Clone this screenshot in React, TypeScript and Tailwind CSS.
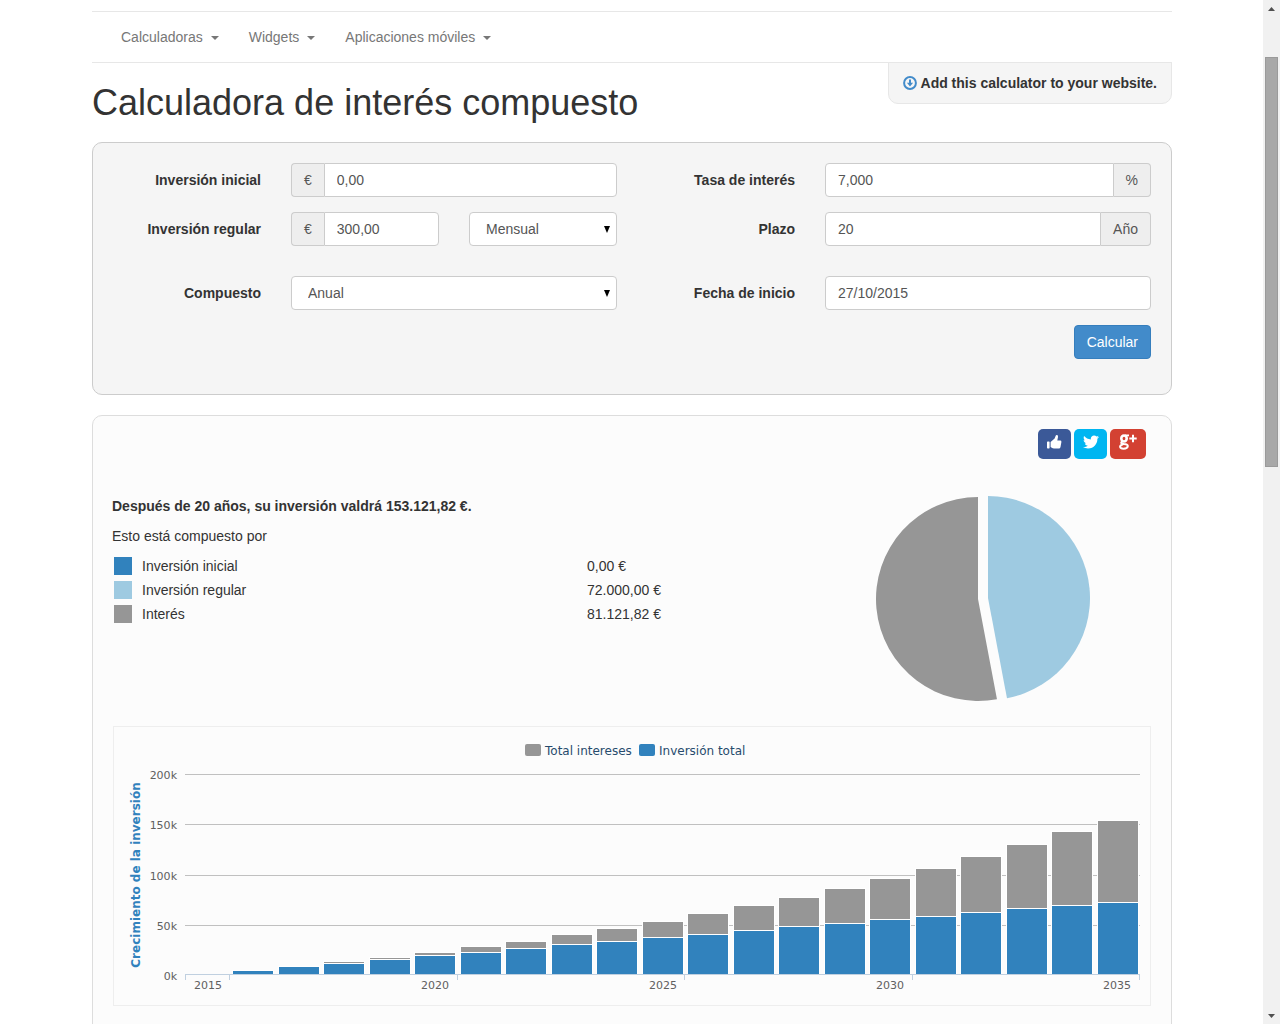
import React from "react";
import { FaTwitter } from "react-icons/fa";

const menus = ["Calculadoras", "Widgets", "Aplicaciones móviles"];

const field =
  "h-[34px] min-w-0 flex-1 border border-[#cccccc] bg-white px-3 text-sm text-[#555555] outline-none";
const addon =
  "flex h-[34px] items-center border border-[#cccccc] bg-[#eeeeee] px-3 text-sm text-[#555555]";
const label = "px-[15px] pt-[7px] text-right text-sm font-bold leading-5";
const social = "flex h-[30px] items-center justify-center rounded-[5px] pb-1 text-white";

function Select({ id, name, value }: { id: string; name: string; value: string }) {
  return (
    <div className="relative">
      <select
        id={id}
        aria-label={name}
        defaultValue={value}
        className="h-[34px] w-full appearance-none rounded border border-[#cccccc] bg-white px-4 text-sm text-[#555555] outline-none"
      >
        <option>{value}</option>
      </select>
      <svg
        className="pointer-events-none absolute right-[7px] top-3.5 h-[7px] w-1.5"
        viewBox="0 0 6 7"
        aria-hidden="true"
      >
        <path d="M0 0h6L3 7z" fill="#000" />
      </svg>
    </div>
  );
}

function DownloadIcon() {
  return (
    <svg className="h-3.5 w-3.5 shrink-0" viewBox="0 0 14 14" aria-hidden="true">
      <circle cx="7" cy="7" r="5.9" fill="none" stroke="#428bca" strokeWidth="2" />
      <path d="M6 3.4h2v3.4h2.1L7 10.6 3.9 6.8H6z" fill="#428bca" />
    </svg>
  );
}

function ThumbIcon() {
  return (
    <svg className="h-3.5 w-[15px]" viewBox="0 0 15 14" aria-hidden="true">
      <path
        d="M0 7.200q0-.7.700-.7H2q.6 0 .6.700v5.600q0 .7-.6.700H.7q-.7 0-.7-.7zM3.600 7L7.600 3.600 8.800.5q.4-.7 1.300-.4 1.100.5.9 2L10.300 5.400h2.900q1.300.1 1.200 1.500l-.9 5q-.3 1.600-1.700 1.600H7q-1.400 0-2.200-.7L3.600 12z"
        fill="#fff"
      />
    </svg>
  );
}

function GooglePlusIcon() {
  return (
    <svg className="h-4 w-[18px]" viewBox="0 0 18 16" aria-hidden="true">
      <g fill="none" stroke="#fff">
        <ellipse cx="5" cy="4.5" rx="2.700" ry="3" strokeWidth="2.600" />
        <path d="M6 1.400h4" strokeWidth="1.800" />
        <path d="M3.200 7.200C1 9.200 3 9.600 5 9.900c2.400.3 4 .8 3.800 2.300-.2 1.600-1.900 2.500-4.200 2.500-2.300 0-3.600-.7-3.500-2 .1-1.400 1.300-2.100 3-2.500" strokeWidth="2" />
        <path d="M14 .8v7.400M10.300 4.500h7.400" strokeWidth="2" />
      </g>
    </svg>
  );
}

const breakdown = [
  { name: "Inversión inicial", value: "0,00 €", swatch: "bg-[#3182bd]" },
  { name: "Inversión regular", value: "72.000,00 €", swatch: "bg-[#9ecae1]" },
  { name: "Interés", value: "81.121,82 €", swatch: "bg-[#969696]" },
];

function Pie() {
  const angle = (72000 / 153121.82) * 2 * Math.PI;
  const r = 102;
  const dx = r * Math.sin(angle);
  const dy = -r * Math.cos(angle);
  return (
    <svg className="w-full" viewBox="0 0 326 230" role="img" aria-label="Composición de la inversión">
      <path d={`M163 118V${118 - r}A${r} ${r} 0 0 1 ${163 + dx} ${118 + dy}z`} fill="#9ecae1" />
      <path d={`M153 119L${153 + dx} ${119 + dy}A${r} ${r} 0 1 1 153 ${119 - r}z`} fill="#969696" />
    </svg>
  );
}

const monthly = Math.pow(1.07, 1 / 12) - 1;
const bars = Array.from({ length: 21 }, (_, i) => {
  const months = Math.min(12 * i + 2, 240);
  return {
    year: 2015 + i,
    invested: 300 * months,
    total: (300 * (Math.pow(1 + monthly, months) - 1) * (1 + monthly)) / monthly,
  };
});

function GrowthChart() {
  const left = 72;
  const pitch = 955 / 21;
  const base = 248;
  const y = (v: number) => Math.round(249 - (v * 201) / 200000);
  return (
    <svg
      className="block w-full font-['DejaVu_Sans',sans-serif]"
      viewBox="1 1 1036 278"
      role="img"
      aria-label="Crecimiento de la inversión"
    >
      <rect x="412" y="18" width="16" height="12" rx="2" fill="#969696" />
      <text x="432" y="29" fontSize="12" fill="#274b6d">Total intereses</text>
      <rect x="526" y="18" width="16" height="12" rx="2" fill="#3182bd" />
      <text x="546" y="29" fontSize="12" fill="#274b6d">Inversión total</text>
      {[200, 150, 100, 50, 0].map((k, i) => (
        <g key={k}>
          {k > 0 && <rect x={left} y={[48, 98, 149, 199][i]} width="955" height="1" fill="#c0c0c0" />}
          <text x="64" y={[53, 103, 154, 204, 254][i]} fontSize="11" textAnchor="end" fill="#606060">
            {k}k
          </text>
        </g>
      ))}
      <text
        transform="translate(27 149) rotate(-90)"
        textAnchor="middle"
        fontSize="12"
        fontWeight="bold"
        fill="#3182bd"
      >
        Crecimiento de la inversión
      </text>
      {bars.map((b, i) => {
        if (i === 0) return null;
        const x = Math.round(left + i * pitch + 2);
        const top = y(b.total);
        const mid = y(b.invested);
        return (
          <g key={b.year}>
            <rect x={x} y={top - 1} width="42" height={base - top + 1} fill="#fff" />
            <rect x={x + 1} y={top} width="40" height={Math.max(mid - top - 1, 0)} fill="#969696" />
            <rect x={x + 1} y={mid} width="40" height={base - mid} fill="#3182bd" />
          </g>
        );
      })}
      <rect x={left} y={248} width="955" height="1" fill="#c0d0e0" />
      {[72, 116, 344, 571, 799, 1026].map((x) => (
        <rect key={x} x={x} y="248" width="1" height="6" fill="#c0d0e0" />
      ))}
      {[2015, 2020, 2025, 2030, 2035].map((yr, i) => (
        <text
          key={yr}
          x={[95, 322, 550, 777, 1004][i]}
          y="263"
          fontSize="11"
          textAnchor="middle"
          fill="#606060"
        >
          {yr}
        </text>
      ))}
    </svg>
  );
}

export default function App() {
  return (
    <div className="flex h-screen overflow-hidden bg-white font-['Liberation_Sans',sans-serif] text-sm leading-5 text-[#333333]">
      <div className="min-w-0 flex-1">
        <main className="mx-auto max-w-[1080px] pt-[11px]">
          <nav className="flex h-[52px] items-center border-y border-[#e7e7e7] px-3.5">
            {menus.map((m) => (
              <button key={m} type="button" className="flex items-center gap-2 px-[15px] text-[#777777]">
                {m}
                <svg className="mt-0.5 h-1 w-2" viewBox="0 0 8 4" aria-hidden="true">
                  <path d="M0 0h8L4 4z" fill="#777" />
                </svg>
              </button>
            ))}
          </nav>

          <header className="flex items-start justify-between">
            <h1 className="pt-5 text-4xl leading-10">Calculadora de interés compuesto</h1>
            <a
              href="#widget"
              className="-mt-px flex h-[42px] items-center gap-1 rounded-b-[10px] border border-[#e7e7e7] bg-[#f5f5f5] px-3.5 font-bold"
            >
              <DownloadIcon />
              Add this calculator to your website.
            </a>
          </header>

          <form
            className="mt-[19px] rounded-[10px] border border-[#cccccc] bg-[#f5f5f5] px-[5px] pb-[35px] pt-5"
            onSubmit={(e) => e.preventDefault()}
          >
            <div className="mb-[15px] grid grid-cols-6">
              <label htmlFor="initial" className={label}>Inversión inicial</label>
              <div className="col-span-2 flex px-[15px]">
                <span className={`${addon} rounded-l border-r-0`}>€</span>
                <input id="initial" defaultValue="0,00" className={`${field} rounded-r`} />
              </div>
              <label htmlFor="rate" className={label}>Tasa de interés</label>
              <div className="col-span-2 flex px-[15px]">
                <input id="rate" defaultValue="7,000" className={`${field} rounded-l`} />
                <span className={`${addon} rounded-r border-l-0`}>%</span>
              </div>
            </div>
            <div className="mb-[30px] grid grid-cols-6">
              <label htmlFor="regular" className={label}>Inversión regular</label>
              <div className="flex px-[15px]">
                <span className={`${addon} rounded-l border-r-0`}>€</span>
                <input id="regular" defaultValue="300,00" className={`${field} rounded-r`} />
              </div>
              <div className="px-[15px]">
                <Select id="frequency" name="Frecuencia" value="Mensual" />
              </div>
              <label htmlFor="term" className={label}>Plazo</label>
              <div className="col-span-2 flex px-[15px]">
                <input id="term" defaultValue="20" className={`${field} rounded-l`} />
                <span className={`${addon} rounded-r border-l-0`}>Año</span>
              </div>
            </div>
            <div className="mb-[15px] grid grid-cols-6">
              <label htmlFor="compound" className={label}>Compuesto</label>
              <div className="col-span-2 px-[15px]">
                <Select id="compound" name="Compuesto" value="Anual" />
              </div>
              <label htmlFor="start" className={label}>Fecha de inicio</label>
              <div className="col-span-2 flex px-[15px]">
                <input id="start" defaultValue="27/10/2015" className={`${field} rounded`} />
              </div>
            </div>
            <div className="flex justify-end px-[15px]">
              <button
                type="submit"
                className="h-[34px] rounded border border-[#357ebd] bg-[#428bca] px-3 text-white"
              >
                Calcular
              </button>
            </div>
          </form>

          <section className="mt-5 rounded-[10px] border border-[#dddddd] bg-[#fcfcfc] px-5 pb-10 pt-[13px]">
            <div className="flex justify-end gap-[3px] pr-[5px]">
              <button type="button" aria-label="Me gusta" className={`${social} w-[33px] bg-[#3b5998]`}>
                <ThumbIcon />
              </button>
              <button type="button" aria-label="Twitter" className={`${social} w-[33px] bg-[#00b6f1]`}>
                <FaTwitter size={16} />
              </button>
              <button type="button" aria-label="Google+" className={`${social} w-9 bg-[#d34132]`}>
                <GooglePlusIcon />
              </button>
            </div>

            <div className="-ml-px mt-[21px] flex gap-[30px]">
              <div className="min-w-0 flex-1 pt-4">
                <p className="mb-2.5 font-bold">Después de 20 años, su inversión valdrá 153.121,82 €.</p>
                <p className="mb-2">Esto está compuesto por</p>
                <table className="w-full">
                  <tbody>
                    {breakdown.map((b) => (
                      <tr key={b.name} className="h-6">
                        <td className="w-[30px]">
                          <div className={`ml-0.5 h-[18px] w-[18px] ${b.swatch}`} />
                        </td>
                        <td className="w-[445px]">{b.name}</td>
                        <td>{b.value}</td>
                      </tr>
                    ))}
                  </tbody>
                </table>
              </div>
              <div className="w-[326px]">
                <Pie />
              </div>
            </div>

            <div className="mt-4 border border-[#eeeeee]">
              <GrowthChart />
            </div>
          </section>
        </main>
      </div>

      <div className="-ml-px flex w-[17px] flex-col items-center bg-[#f1f1f1]" aria-hidden="true">
        <svg className="mt-[7px] h-1 w-[7px]" viewBox="0 0 7 4">
          <path d="M0 4h7L3.5 0z" fill="#505050" />
        </svg>
        <div className="mt-[46px] h-2/5 w-[13px] border border-[#9a9a9a] bg-[#a8a8a8]" />
        <svg className="mb-1.5 mt-auto h-1 w-[7px]" viewBox="0 0 7 4">
          <path d="M0 0h7L3.5 4z" fill="#505050" />
        </svg>
      </div>
    </div>
  );
}
